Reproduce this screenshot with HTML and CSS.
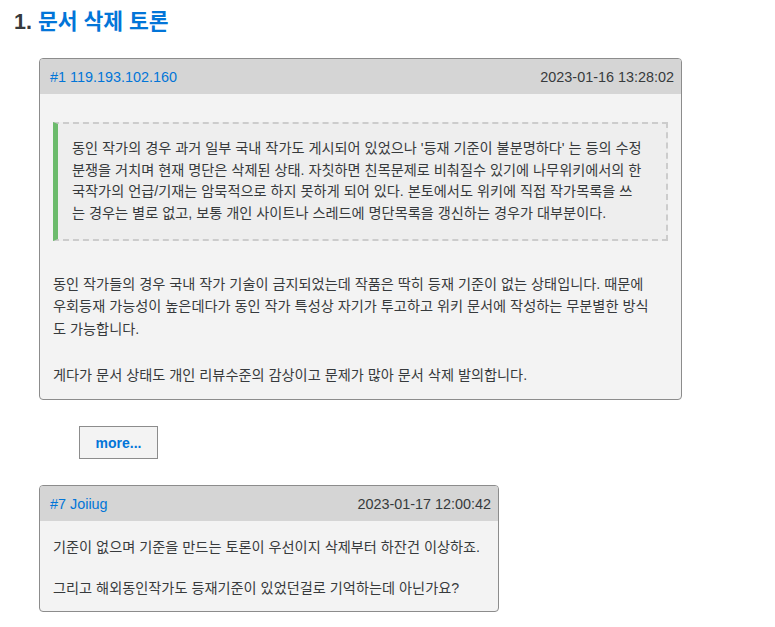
FILE: index.html
```html
<!DOCTYPE html>
<html lang="ko">
<head>
<meta charset="utf-8">
<title>문서 삭제 토론</title>
<link rel="stylesheet" href="styles.css">
</head>
<body>
<div class="page">
  <h1 class="title"><span class="num">1.</span> <a class="title-link">문서 삭제 토론</a></h1>

  <div class="res res-wide">
    <div class="res-head">
      <a class="user">#1 119.193.102.160</a>
      <span class="time">2023-01-16 13:28:02</span>
    </div>
    <div class="res-body">
      <blockquote class="quote">동인 작가의 경우 과거 일부 국내 작가도 게시되어 있었으나 '등재 기준이 불분명하다' 는 등의 수정<br>분쟁을 거치며 현재 명단은 삭제된 상태. 자칫하면 친목문제로 비춰질수 있기에 나무위키에서의 한<br>국작가의 언급/기재는 암묵적으로 하지 못하게 되어 있다. 본토에서도 위키에 직접 작가목록을 쓰<br>는 경우는 별로 없고, 보통 개인 사이트나 스레드에 명단목록을 갱신하는 경우가 대부분이다.</blockquote>
      <p class="text text-wide">동인 작가들의 경우 국내 작가 기술이 금지되었는데 작품은 딱히 등재 기준이 없는 상태입니다. 때문에<br>우회등재 가능성이 높은데다가 동인 작가 특성상 자기가 투고하고 위키 문서에 작성하는 무분별한 방식<br>도 가능합니다.<br><br>게다가 문서 상태도 개인 리뷰수준의 감상이고 문제가 많아 문서 삭제 발의합니다.</p>
    </div>
  </div>

  <div class="more-row"><button class="more">more...</button></div>

  <div class="res res-fit">
    <div class="res-head">
      <a class="user">#7 Joiiug</a>
      <span class="time">2023-01-17 12:00:42</span>
    </div>
    <div class="res-body res-body-fit">
      <p class="text text-fit">기준이 없으며 기준을 만드는 토론이 우선이지 삭제부터 하잔건 이상하죠.<br><br>그리고 해외동인작가도 등재기준이 있었던걸로 기억하는데 아닌가요?</p>
    </div>
  </div>
</div>
</body>
</html>
```

FILE: styles.css
```css
html, body {
  margin: 0;
  padding: 0;
  background: #ffffff;
}

body {
  font-family: "Liberation Sans", "Noto Sans CJK KR", sans-serif;
  color: #373a3c;
}

.page {
  padding: 10px 0 0 14px;
}

.title {
  margin: 0;
  font-size: 21.5px;
  line-height: 24px;
  font-weight: bold;
  color: #373a3c;
}

.title-link {
  color: #0275d8;
  text-decoration: none;
}

.res {
  margin-left: 25px;
  border: 1px solid #8c8c8c;
  border-radius: 4px;
  overflow: hidden;
  background: #f3f3f3;
  box-sizing: border-box;
}

.res-wide {
  width: 643px;
  margin-top: 24px;
}

.res-fit {
  width: fit-content;
  margin-top: 26px;
}

.res-head {
  height: 35px;
  display: flex;
  align-items: center;
  justify-content: space-between;
  gap: 20px;
  padding: 0 7px 0 10px;
  background: #d5d5d5;
  font-size: 14.4px;
  line-height: 18px;
}

.user {
  color: #0275d8;
  text-decoration: none;
}

.time {
  color: #373a3c;
}

.res-body {
  padding: 14px 13px 13px 13px;
  font-size: 14.2px;
}

.res-body-fit {
  padding: 16px 18px 12px 13px;
}

.quote {
  margin: 14px 0 31.5px 0;
  padding: 14px 10px 15px 14px;
  border: 2px dashed #cccccc;
  border-left: 5px solid #6cbb6c;
  background: #eeeeee;
  line-height: 21.5px;
  white-space: nowrap;
}

.text {
  margin: 0;
  white-space: nowrap;
}

.text-wide {
  line-height: 22.75px;
}

.text-fit {
  line-height: 20.5px;
}

.more-row {
  padding-left: 65px;
  margin-top: 26px;
}

.more {
  display: block;
  width: 79px;
  height: 33px;
  margin: 0;
  padding: 0;
  border: 1px solid #8c8c8c;
  background: #f3f3f3;
  color: #0275d8;
  font-family: "Liberation Sans", sans-serif;
  font-size: 14px;
  font-weight: bold;
  cursor: pointer;
}
```
